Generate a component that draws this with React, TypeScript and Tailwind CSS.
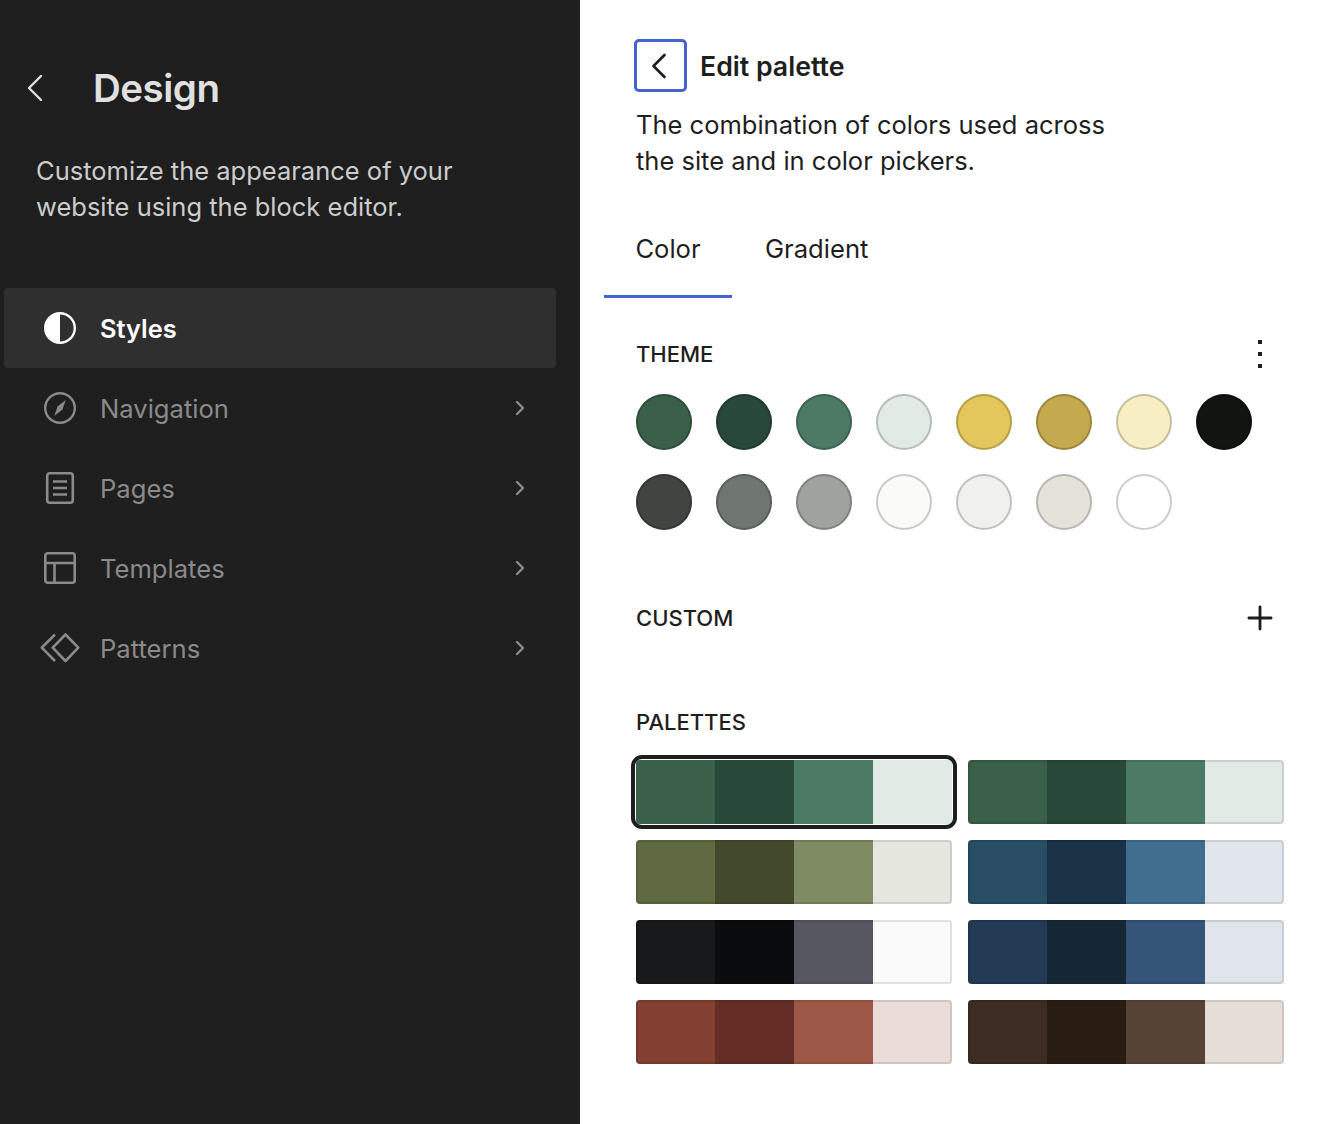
import { ChevronLeft, ChevronRight, Plus } from "lucide-react";

const theme = [
  ["#3a6049", "#28493a", "#4d7a64", "#e2eae6", "#e3c75c", "#c4a94e", "#f7eec4", "#101512"],
  ["#404541", "#707670", "#9fa39f", "#fafaf7", "#f0f0ed", "#e4e3da", "#ffffff"],
];

const palettes = [
  ["#3a6049", "#28493a", "#4d7a64", "#e2eae6"],
  ["#3a6049", "#28493a", "#4d7a64", "#e2eae6"],
  ["#5f6a43", "#43492c", "#7e8b63", "#e5e7df"],
  ["#2a4d66", "#193245", "#3f6e8f", "#e0e6eb"],
  ["#18191b", "#0a0b0c", "#55565f", "#fafafa"],
  ["#233a54", "#152635", "#345478", "#e0e5ec"],
  ["#843f33", "#642e26", "#9e5847", "#eadcd8"],
  ["#3d2c22", "#281c13", "#574335", "#e7ddd7"],
];

function StylesIcon() {
  return (
    <svg width="32" height="32" viewBox="0 0 32 32" className="shrink-0">
      <circle cx="16" cy="16" r="14.8" fill="none" stroke="#fff" strokeWidth="2.4" />
      <path d="M16 1a15 15 0 0 0 0 30z" fill="#fff" />
    </svg>
  );
}

function NavigationIcon() {
  return (
    <svg width="32" height="32" viewBox="0 0 32 32" fill="none" className="shrink-0">
      <circle cx="16" cy="16" r="14.8" stroke="currentColor" strokeWidth="2.4" />
      <path d="M21.7 8L18.5 17.5L10.3 24L13.5 14.5z" fill="currentColor" />
    </svg>
  );
}

function PagesIcon() {
  return (
    <svg width="32" height="32" viewBox="0 0 32 32" fill="none" stroke="currentColor" strokeWidth="2.6" className="shrink-0">
      <rect x="3.2" y="1.3" width="25.6" height="29.4" rx="2.5" />
      <path d="M9 9.5h14M9 16h14M9 22.5h14" />
    </svg>
  );
}

function TemplatesIcon() {
  return (
    <svg width="32" height="32" viewBox="0 0 32 32" fill="none" stroke="currentColor" strokeWidth="2.6" className="shrink-0">
      <rect x="1.3" y="1.3" width="29.4" height="29.4" rx="2.5" />
      <path d="M1.3 11h29.4M10.5 11v19.7" />
    </svg>
  );
}

function PatternsIcon() {
  return (
    <svg width="40" height="32" viewBox="0 -1 40 32" fill="none" stroke="currentColor" strokeWidth="2.6" strokeLinejoin="round" className="shrink-0">
      <path d="M25.5 1.5L38.3 14.7L25.5 28L12.7 14.7z" />
      <path d="M15 1.5L1.8 14.7L15 28" />
    </svg>
  );
}

const navItems = [
  { label: "Navigation", icon: <NavigationIcon /> },
  { label: "Pages", icon: <PagesIcon /> },
  { label: "Templates", icon: <TemplatesIcon /> },
  { label: "Patterns", icon: <PatternsIcon /> },
];

function Swatch({ colors, selected }: { colors: string[]; selected?: boolean }) {
  return (
    <div className={selected ? "relative h-16 rounded-[6px] outline-[4px] outline-offset-[1px] outline-[#1e1e1e]" : "relative h-16"}>
      <div className="flex h-full overflow-hidden rounded-[4px]">
        {colors.map((c, i) => (
          <div key={i} className="flex-1" style={{ backgroundColor: c }} />
        ))}
      </div>
      {!selected && <div className="absolute inset-0 rounded-[4px] border-2 border-black/10" />}
    </div>
  );
}

export default function App() {
  return (
    <div className="flex min-h-[1124px] font-['Inter',sans-serif]">
      <aside className="w-[580px] shrink-0 bg-[#1e1e1e] pl-1 pr-6 pt-[64px] text-[#e0e0e0]">
        <div className="flex h-12 items-center">
          <ChevronLeft size={48} strokeWidth={1.2} className="ml-[7px] shrink-0 text-[#e0e0e0]" />
          <h1 className="ml-[34px] pt-[2px] text-[38.5px] font-semibold tracking-[-0.5px]">Design</h1>
        </div>
        <p className="ml-8 mt-[41px] text-[25.5px] leading-[36px] text-[#cccccc]">
          Customize the appearance of your
          <br />
          website using the block editor.
        </p>
        <nav className="mt-[63px]">
          <div className="flex h-20 items-center rounded-[4px] bg-[#2f2f2f] pl-10 text-white">
            <StylesIcon />
            <span className="ml-[24px] pt-[2px] text-[25.4px] font-semibold">Styles</span>
          </div>
          {navItems.map((item) => (
            <div key={item.label} className="flex h-20 items-center pl-10 text-[#8a8a8a]">
              <div className="flex w-8 justify-center">{item.icon}</div>
              <span className="ml-[24px] flex-1 pt-[2px] text-[25.6px]">{item.label}</span>
              <ChevronRight size={24} strokeWidth={2.4} className="mr-6" />
            </div>
          ))}
        </nav>
      </aside>

      <main className="flex-1 bg-white pl-6 pr-[44px] pt-[39px] text-[#1e1e1e]">
        <div className="flex items-center pl-[30px]">
          <button className="flex h-[53px] w-[53px] items-center justify-center rounded-[5px] border-[3px] border-[#4562d0]">
            <ChevronLeft size={44} strokeWidth={1.45} className="mr-[3px] shrink-0" />
          </button>
          <h2 className="ml-[13px] pt-[2px] text-[26.7px] font-semibold">Edit palette</h2>
        </div>
        <p className="ml-8 mt-[15px] text-[25.5px] leading-[36px]">
          The combination of colors used across
          <br />
          the site and in color pickers.
        </p>
        <div className="mt-[38px] flex">
          <div className="flex h-[81px] w-32 items-center justify-center border-b-[3px] border-[#4562d0] pb-[13px] text-[25.6px]">Color</div>
          <div className="flex h-[81px] items-center border-b-[3px] border-transparent pb-[13px] pl-[33px] text-[25.6px]">Gradient</div>
        </div>
        <section className="pl-8">
          <div className="mt-[38px] flex h-9 items-center justify-between">
            <h3 className="text-[22px] font-medium uppercase">Theme</h3>
            <div className="mr-[22px] flex flex-col gap-2">
              <span className="h-1 w-1 bg-[#1e1e1e]" />
              <span className="h-1 w-1 bg-[#1e1e1e]" />
              <span className="h-1 w-1 bg-[#1e1e1e]" />
            </div>
          </div>
          <div className="mt-[22px] flex flex-col gap-6">
            {theme.map((row, i) => (
              <div key={i} className="flex gap-6">
                {row.map((c, j) => (
                  <div key={j} className="h-14 w-14 rounded-full shadow-[inset_0_0_0_2px_rgba(0,0,0,0.2)]" style={{ backgroundColor: c }} />
                ))}
              </div>
            ))}
          </div>
          <div className="mt-[70px] flex h-9 items-center justify-between">
            <h3 className="text-[22px] font-medium uppercase">Custom</h3>
            <Plus size={38} strokeWidth={1.8} className="mr-[5px] shrink-0" />
          </div>
          <h3 className="mt-[68px] h-9 text-[22px] font-medium uppercase leading-9">Palettes</h3>
          <div className="mt-5 grid grid-cols-2 gap-4">
            {palettes.map((p, i) => (
              <Swatch key={i} colors={p} selected={i === 0} />
            ))}
          </div>
        </section>
      </main>
    </div>
  );
}
